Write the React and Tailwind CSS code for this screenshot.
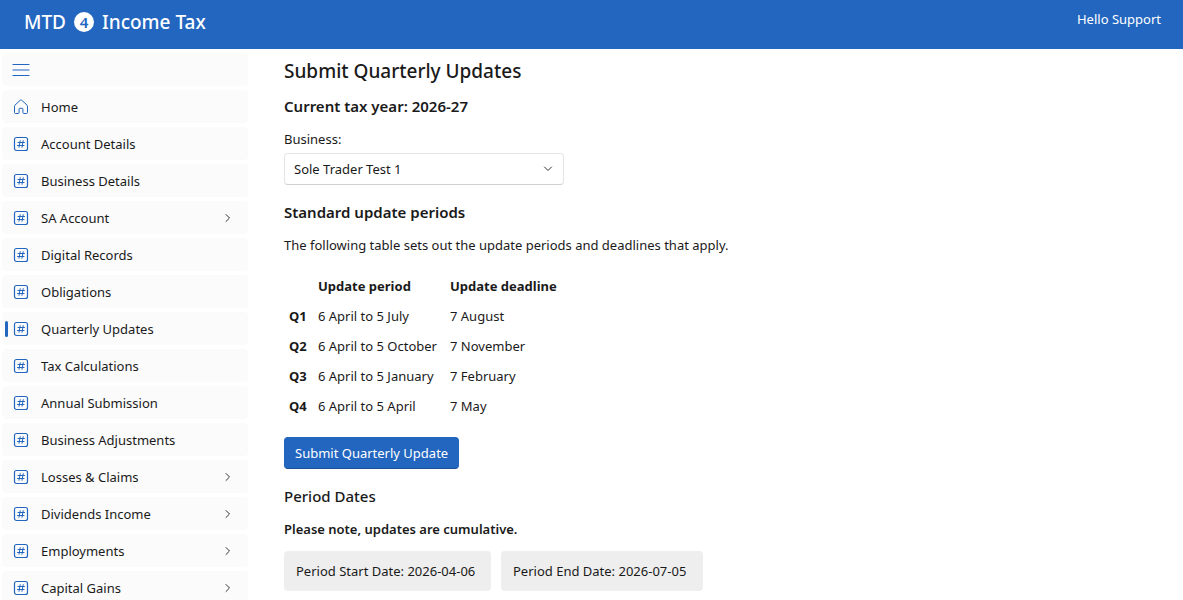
import React, { useState } from 'react';

const menuItems = [
  { label: 'Home', icon: 'home' },
  { label: 'Account Details' },
  { label: 'Business Details' },
  { label: 'SA Account', expandable: true },
  { label: 'Digital Records' },
  { label: 'Obligations' },
  { label: 'Quarterly Updates' },
  { label: 'Tax Calculations' },
  { label: 'Annual Submission' },
  { label: 'Business Adjustments' },
  { label: 'Losses & Claims', expandable: true },
  { label: 'Dividends Income', expandable: true },
  { label: 'Employments', expandable: true },
  { label: 'Capital Gains', expandable: true },
];

const updatePeriods = [
  { quarter: 'Q1', period: '6 April to 5 July', deadline: '7 August' },
  { quarter: 'Q2', period: '6 April to 5 October', deadline: '7 November' },
  { quarter: 'Q3', period: '6 April to 5 January', deadline: '7 February' },
  { quarter: 'Q4', period: '6 April to 5 April', deadline: '7 May' },
];

const HomeIcon = () => (
  <svg className="size-4 shrink-0" viewBox="0 0 16 16" fill="none" stroke="currentColor" strokeLinejoin="round">
    <path d="M7.3 1.2a1 1 0 0 1 1.4 0l5.3 4.9c.3.3.5.7.5 1.1v6.3a1 1 0 0 1-1 1h-2.6a1 1 0 0 1-1-1V10a.7.7 0 0 0-.7-.7H6.8a.7.7 0 0 0-.7.7v3.5a1 1 0 0 1-1 1H2.5a1 1 0 0 1-1-1V7.2c0-.4.2-.8.5-1.100z" />
  </svg>
);

const HashIcon = () => (
  <svg className="size-4 shrink-0" viewBox="0 0 16 16" fill="none" stroke="currentColor" strokeLinecap="round">
    <rect x="1.5" y="1.5" width="13" height="13" rx="2" strokeWidth="1.2" />
    <path d="M7.2 4.7L6 11.3M10.2 4.7L9 11.3M5 6.5h6.500M4.500 9.500H11" />
  </svg>
);

const ChevronIcon = ({ className }) => (
  <svg className={className} viewBox="0 0 12 12" fill="none" stroke="currentColor" strokeLinecap="round" strokeLinejoin="round">
    <path d="M4 2.500L7.500 6L4 9.500" />
  </svg>
);

const MenuItem = ({ item, active, onSelect }) => (
  <li>
    <a
      href="#"
      aria-current={active ? 'page' : undefined}
      onClick={(e) => {
        e.preventDefault();
        onSelect(item.label);
      }}
      className="relative flex h-[33px] items-center gap-3 rounded bg-[#fbfbfb] pl-[11px] pr-[14px] hover:bg-gray-100"
    >
      {active && <span className="absolute left-[3px] h-4 w-[3px] rounded-full bg-[#2266bf]" />}
      <span className="text-[#2266bf]">{item.icon === 'home' ? <HomeIcon /> : <HashIcon />}</span>
      <span className="flex-1">{item.label}</span>
      {item.expandable && <ChevronIcon className="size-3 text-[#333333]" />}
    </a>
  </li>
);

const App = () => {
  const [activeItem, setActiveItem] = useState('Quarterly Updates');
  const [menuOpen, setMenuOpen] = useState(true);
  const [business, setBusiness] = useState('Sole Trader Test 1');

  return (
    <div className="flex h-screen flex-col bg-white font-['Noto_Sans','Open_Sans',sans-serif] text-[13px] leading-5 text-[#1a1a1a]">
      <header className="flex h-[49px] shrink-0 items-start justify-between bg-[#2266bf] pl-6 pr-[22px] text-white">
        <div className="flex items-center gap-2 pt-2 text-[19px] font-medium leading-7">
          <span>MTD</span>
          <span className="flex size-5 items-center justify-center rounded-full bg-white text-[15px] font-semibold text-[#2266bf]">
            4
          </span>
          <span>Income Tax</span>
        </div>
        <span className="pt-[9px]">Hello Support</span>
      </header>

      <div className="flex min-h-0 flex-1">
        <nav className="w-[250px] shrink-0 overflow-y-auto px-[2px] pt-1 [scrollbar-width:none]">
          <button
            type="button"
            aria-label="Toggle menu"
            aria-expanded={menuOpen}
            onClick={() => setMenuOpen(!menuOpen)}
            className="mb-1 flex h-[33px] w-full items-center rounded bg-[#fbfbfb] pl-[10px] text-[#2266bf]"
          >
            <svg className="h-4 w-[18px]" viewBox="0 0 18 16" fill="none" stroke="currentColor" strokeWidth="1.2" strokeLinecap="round">
              <path d="M1 2.500h16M1 8h16M1 13.500h16" />
            </svg>
          </button>
          {menuOpen && (
            <ul className="flex flex-col gap-1">
              {menuItems.map((item) => (
                <MenuItem
                  key={item.label}
                  item={item}
                  active={item.label === activeItem}
                  onSelect={setActiveItem}
                />
              ))}
            </ul>
          )}
        </nav>

        <main className="min-w-0 flex-1 overflow-y-auto pl-[34px] pr-6 pt-2">
          <h1 className="text-[19px] font-medium leading-7">Submit Quarterly Updates</h1>
          <h2 className="mt-[10px] text-[15px] font-semibold leading-[22px]">Current tax year: 2026-27</h2>

          <label htmlFor="business" className="mt-3 block">
            Business:
          </label>
          <div className="relative mt-1 w-[280px]">
            <select
              id="business"
              value={business}
              onChange={(e) => setBusiness(e.target.value)}
              className="h-8 w-full appearance-none rounded border border-[#e5e5e5] border-b-[#d0d0d0] bg-white pl-[9px] pr-8"
            >
              <option>Sole Trader Test 1</option>
            </select>
            <ChevronIcon className="pointer-events-none absolute right-[10px] top-[10px] size-3 rotate-90 text-[#333333]" />
          </div>

          <h2 className="mt-4 text-[15px] font-semibold leading-[22px]">Standard update periods</h2>
          <p className="mt-3">The following table sets out the update periods and deadlines that apply.</p>

          <table className="mt-4 text-left">
            <thead>
              <tr>
                <td className="min-w-[29px] p-[5px]"></td>
                <th scope="col" className="min-w-[132px] p-[5px] font-bold">Update period</th>
                <th scope="col" className="p-[5px] font-bold">Update deadline</th>
              </tr>
            </thead>
            <tbody>
              {updatePeriods.map((row) => (
                <tr key={row.quarter}>
                  <th scope="row" className="p-[5px] font-bold">{row.quarter}</th>
                  <td className="p-[5px]">{row.period}</td>
                  <td className="p-[5px]">{row.deadline}</td>
                </tr>
              ))}
            </tbody>
          </table>

          <button
            type="button"
            className="mt-4 block h-8 rounded border border-[#2266bf] border-b-[#1b4f94] bg-[#2266bf] px-[10px] text-white hover:bg-[#1d5aa9]"
          >
            Submit Quarterly Update
          </button>

          <h2 className="mt-4 text-[15px] font-medium leading-[22px]">Period Dates</h2>
          <p className="mt-3 font-semibold">Please note, updates are cumulative.</p>
          <div className="mt-3 flex gap-[10px]">
            <div className="min-w-[207px] rounded bg-[#eeeeee] px-3 py-[10px]">Period Start Date: 2026-04-06</div>
            <div className="min-w-[202px] rounded bg-[#eeeeee] px-3 py-[10px]">Period End Date: 2026-07-05</div>
          </div>
        </main>
      </div>
    </div>
  );
};

export default App;
